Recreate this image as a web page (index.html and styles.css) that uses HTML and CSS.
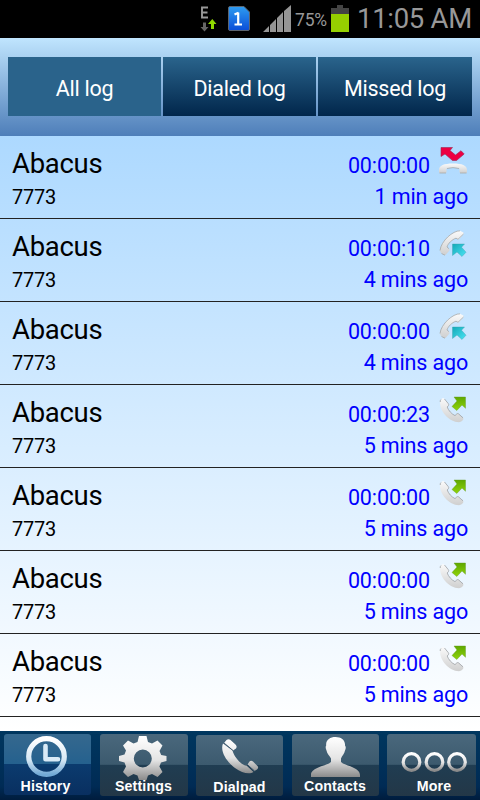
FILE: index.html
```html
<!DOCTYPE html>
<html lang="en">
<head>
<meta charset="utf-8">
<title>Call history</title>
<link rel="stylesheet" href="styles.css">
</head>
<body>
<svg class="defs" width="0" height="0" aria-hidden="true">
  <defs>
    <linearGradient id="silver" x1="0" y1="0" x2="0" y2="1"><stop offset="0" stop-color="#fff"/><stop offset=".55" stop-color="#e4e4e4"/><stop offset="1" stop-color="#8b8b8b"/></linearGradient>
    <linearGradient id="handset" x1="0" y1="0" x2="0" y2="1"><stop offset="0" stop-color="#fafafa"/><stop offset="1" stop-color="#cfcfcf"/></linearGradient>
    <linearGradient id="green" x1="0" y1="0" x2="0" y2="1"><stop offset="0" stop-color="#5fa800"/><stop offset="1" stop-color="#8fd40c"/></linearGradient>
    <linearGradient id="cyan" x1="0" y1="0" x2="1" y2="1"><stop offset="0" stop-color="#12a9b8"/><stop offset="1" stop-color="#4be4f4"/></linearGradient>
    <linearGradient id="clock" x1="0" y1="0" x2="0" y2="1"><stop offset="0" stop-color="#fff"/><stop offset=".6" stop-color="#d5e7f4"/><stop offset="1" stop-color="#72a9d5"/></linearGradient>
    <linearGradient id="sim" x1="0" y1="0" x2="0" y2="1"><stop offset="0" stop-color="#2e9cf0"/><stop offset="1" stop-color="#0a4dd8"/></linearGradient>
    <symbol id="missed" viewBox="0 0 30 30">
      <path d="M1 23C1 18.500 6 16.500 15 16.500S29 18.500 29 23V25Q29 26 28 26H22.500Q21.500 26 21.500 25V21.500Q15 19.500 8.500 21.500V25Q8.500 26 7.500 26H2Q1 26 1 25Z" fill="url(#handset)"/>
      <path d="M9 21.500Q15 19.700 21 21.500M22 26H28.500M1.500 26H8" fill="none" stroke="#aaa9a6" stroke-width=".8"/>
      <path d="M3 .500H14.500L12 3.500 17.500 8 23 3.700 26.200 7 18.500 13.500H14.500L7 7 3 9.500Z" fill="#ed0043" stroke="#9b2953" stroke-width=".6"/>
    </symbol>
    <symbol id="incoming" viewBox="0 0 30 30">
      <path d="M22 .800C15 .500 3 11 2 20.500Q2 22.500 4 23.500L6 25Q7 25.500 8 24.500L11.500 20.500Q12 19.500 11 18.700L9 17C10 13.500 14 9.500 18 8.200L19.500 9.200Q20.500 9.800 21.500 8.700L25.500 4Q26 3 25 2.300Z" fill="url(#handset)"/>
      <path d="M22 .800C15 .500 3 11 2 20.500M11 18.700L9 17C10 13.500 14 9.500 18 8.200L20 9.300 25.500 4M3.500 23.500L7 25.200" fill="none" stroke="#a4a8aa" stroke-width=".8"/>
      <path d="M14.500 14H26.500L23.500 17.200 28 22.200 24 26.500 19 22 14.500 25.500Z" fill="url(#cyan)" stroke="#3b9faa" stroke-width=".4"/>
    </symbol>
    <symbol id="outgoing" viewBox="0 0 30 30">
      <path d="M4.500 2.200Q3 2.800 2.200 5C1 15 11 26 21 26.300Q23.500 26 25 24Q26 22.800 25 21.800L20.500 17.800Q19.500 17.200 18.700 18L17 19.600C13.500 18 10.500 14.500 9.200 11L10.500 9.500Q11 8.500 10.200 7.500L6.500 3Q5.500 1.800 4.500 2.200Z" fill="url(#handset)"/>
      <path d="M6.500 3L10.200 7.500Q11 8.500 10.500 9.500L9.200 11C10.500 14.500 13.500 18 17 19.600L18.700 18Q19.500 17.200 20.500 17.800L25 21.800M3 3.500Q2.200 4 2.200 6" fill="none" stroke="#9da1a5" stroke-width=".8"/>
      <path d="M16 1H27.500V12.300L24 9 18.800 14.500 14 10.500 19 5Z" fill="url(#green)" stroke="#609820" stroke-width=".4"/>
    </symbol>
  </defs>
</svg>

<div class="screen">
  <header class="status">
    <svg class="status-icons" width="160" height="38" viewBox="190 0 160 38">
      <path d="M208 7.500H202V17.500H208M202 12.500H207.500" fill="none" stroke="#989898" stroke-width="1.900"/>
      <path d="M203 22.500H206V27H208.500L204.500 31.500 200.500 27H203Z" fill="#666"/>
      <path d="M211 29V24H208L212.300 19 216.500 24H214V29Z" fill="#8fd800"/>
      <path d="M230 6.500H244L249.500 12V29Q249.500 30.500 248 30.500H230Q228.500 30.500 228.500 29V8Q228.500 6.500 230 6.500Z" fill="url(#sim)" stroke="#5c6570"/>
      <path d="M238.200 12.500V25M234.500 14.500L238.500 12.700M234.500 24.500H242" fill="none" stroke="#fff" stroke-width="2.200"/>
      <path d="M263 32L269 26V32ZM270 25L276 19V32H270ZM277 18L283 12V32H277ZM284 11L291 5V32H284Z" fill="#959595"/>
      <path d="M337 5H343V8H349V14H331V8H337Z" fill="#444"/>
      <path d="M331 14H349V32H331Z" fill="#96d000"/>
    </svg>
    <span class="percent">75%</span>
    <span class="time">11:05 AM</span>
  </header>

  <nav class="tabs">
    <div class="tab active">All log</div>
    <div class="tab">Dialed log</div>
    <div class="tab">Missed log</div>
  </nav>

  <main class="log">
    <div class="row"><div class="who"><div class="name">Abacus</div><div class="num">7773</div></div><div class="info"><div class="top"><span class="dur">00:00:00</span><svg class="type"><use href="#missed"/></svg></div><div class="ago">1 min ago</div></div></div>
    <div class="row"><div class="who"><div class="name">Abacus</div><div class="num">7773</div></div><div class="info"><div class="top"><span class="dur">00:00:10</span><svg class="type"><use href="#incoming"/></svg></div><div class="ago">4 mins ago</div></div></div>
    <div class="row"><div class="who"><div class="name">Abacus</div><div class="num">7773</div></div><div class="info"><div class="top"><span class="dur">00:00:00</span><svg class="type"><use href="#incoming"/></svg></div><div class="ago">4 mins ago</div></div></div>
    <div class="row"><div class="who"><div class="name">Abacus</div><div class="num">7773</div></div><div class="info"><div class="top"><span class="dur">00:00:23</span><svg class="type"><use href="#outgoing"/></svg></div><div class="ago">5 mins ago</div></div></div>
    <div class="row"><div class="who"><div class="name">Abacus</div><div class="num">7773</div></div><div class="info"><div class="top"><span class="dur">00:00:00</span><svg class="type"><use href="#outgoing"/></svg></div><div class="ago">5 mins ago</div></div></div>
    <div class="row"><div class="who"><div class="name">Abacus</div><div class="num">7773</div></div><div class="info"><div class="top"><span class="dur">00:00:00</span><svg class="type"><use href="#outgoing"/></svg></div><div class="ago">5 mins ago</div></div></div>
    <div class="row"><div class="who"><div class="name">Abacus</div><div class="num">7773</div></div><div class="info"><div class="top"><span class="dur">00:00:00</span><svg class="type"><use href="#outgoing"/></svg></div><div class="ago">5 mins ago</div></div></div>
  </main>

  <footer class="bar">
    <div class="item selected">
      <svg width="88" height="46" viewBox="0 0 88 46"><circle cx="42.500" cy="22.500" r="17.800" fill="none" stroke="url(#clock)" stroke-width="5.200"/><path d="M41.500 12V25.200H54" fill="none" stroke="#d9eaf6" stroke-width="4.600" stroke-linecap="round" stroke-linejoin="round"/></svg>
      <span>History</span>
    </div>
    <div class="item">
      <svg width="88" height="46" viewBox="0 0 88 46"><path fill-rule="evenodd" fill="url(#silver)" d="M39 2H46.500L48 8 52 9.600 57.500 6.500 62.500 11.500 59.500 17 61.200 21 66.500 22V27L61 28.500 59.400 32.500 62.500 38 57.500 43 52 40 48 41.600 46.500 46H39L37.500 41.500 33.500 40 28 43 23 38 26 32.500 24.500 28.500 19 27V22L24.500 20.500 26 16.500 23 11.500 28 6.500 33.500 9.500 37.500 8ZM42.800 15.500A9 9 0 1 0 42.800 33.500A9 9 0 1 0 42.800 15.500Z"/></svg>
      <span>Settings</span>
    </div>
    <div class="item lower">
      <svg width="88" height="46" viewBox="0 0 88 46"><path fill="url(#silver)" d="M27 8.500C23.500 17 32 28 39 33C46 38.500 54 39.500 57.500 37L50.500 30.500C47 31.500 38 22.500 36.500 15.500ZM28 8L30.500 5Q32.500 3.500 34.500 5L39.500 9.500Q41.500 11.500 40 13.500L37 15.500ZM51.500 29.500L53.500 26.500Q55 25 57 26.500L61.500 31Q63 33 61 34.500L58.500 36Z"/><path d="M28 8L37 15.500M51.500 29.700L58.500 36" stroke="#405b70"/></svg>
      <span>Dialpad</span>
    </div>
    <div class="item">
      <svg width="88" height="46" viewBox="0 0 88 46"><path fill="url(#silver)" d="M44.500 3C50 3 54.500 6 54 11.500Q55.500 13 54 16.500C53.500 20 51 21.500 50 24.500V28C54 32 69 33 69 41V43H20V41C20 33 36 32 40 28V24.500C38.500 21.500 36 20 35.500 16.500Q34 13 35.200 11.500C34.500 6 39 3 44.500 3Z"/></svg>
      <span>Contacts</span>
    </div>
    <div class="item more">
      <svg width="90" height="46" viewBox="0 0 90 46"><g fill="none" stroke="url(#silver)" stroke-width="3.200"><circle cx="24.500" cy="28" r="8.300"/><circle cx="47.500" cy="28" r="8.300"/><circle cx="70" cy="28" r="8.300"/></g></svg>
      <span>More</span>
    </div>
  </footer>
</div>
</body>
</html>
```
FILE: styles.css
```css
* { box-sizing: border-box; }
body { margin: 0; background: #000; font-family: Roboto, "Liberation Sans", sans-serif; }
.defs { position: absolute; }
.screen { width: 480px; height: 800px; display: flex; flex-direction: column; overflow: hidden; }

.status { height: 38px; flex: none; display: flex; align-items: center; padding-left: 190px; background: #000; color: #989898; }
.status-icons { flex: none; }
.percent { margin-left: -55px; width: 34px; font-size: 17.5px; line-height: 20px; padding-top: 2px; letter-spacing: -0.2px; white-space: nowrap; }
.time { margin-left: 28px; font-size: 27.5px; font-weight: 400; letter-spacing: -0.3px; line-height: 38px; white-space: nowrap; }

.tabs { height: 98px; flex: none; display: grid; grid-template-columns: 153px 153px 154px; gap: 2px; padding: 19px 8px 20px; background: linear-gradient(#c0e5fe, #4e7eb9); }
.tab { display: flex; align-items: center; justify-content: center; padding-top: 3px; color: #fff; font-size: 21.5px; letter-spacing: -0.25px; background: linear-gradient(#2a648c, #01264b); white-space: nowrap; }
.tab.active { background: #2a638b; }

.log { height: 595px; flex: none; background: linear-gradient(#add9ff, #fff); }
.row { height: 83px; display: flex; justify-content: space-between; padding: 0 12px; border-bottom: 1px solid #222; color: #000; white-space: nowrap; }
.name { margin-top: 12px; font-size: 27.5px; line-height: 32px; letter-spacing: -0.3px; }
.num { margin-top: 5px; font-size: 20px; line-height: 24px; letter-spacing: -0.2px; }
.info { color: #00f; text-align: right; }
.top { display: flex; justify-content: flex-end; margin-top: 10px; height: 34px; }
.dur { font-size: 21.5px; line-height: 24px; margin-top: 8px; letter-spacing: -0.1px; }
.type { width: 30px; height: 30px; margin: 1px 0 0 8px; }
.ago { margin-top: 5px; font-size: 21.5px; line-height: 24px; letter-spacing: -0.15px; }

.bar { flex: none; height: 69px; display: grid; grid-template-columns: 87px 88px 87px 87px 89px; column-gap: 8.5px; padding: 3px 4px 0; background: linear-gradient(#00375f, #002b55 80%, #001c3d); }
.item { height: 62px; display: flex; flex-direction: column; align-items: center; border-radius: 3px; background: linear-gradient(#4a687d, #3c5a6e 49%, #203d52 50%, #233747); color: #fff; overflow: hidden; }
.item.selected { height: 61px; background: linear-gradient(#35688e, #25618e 49%, #0b3b6e 50%, #092f60); }
.item.lower { margin-top: 1px; height: 61px; }
.item svg { flex: none; }
.item span { margin-top: -2px; font: bold 14.2px/16px "Liberation Sans", sans-serif; letter-spacing: 0.15px; }
.item.selected span { padding-right: 4px; }
.item.more span { padding-left: 5px; }
```
